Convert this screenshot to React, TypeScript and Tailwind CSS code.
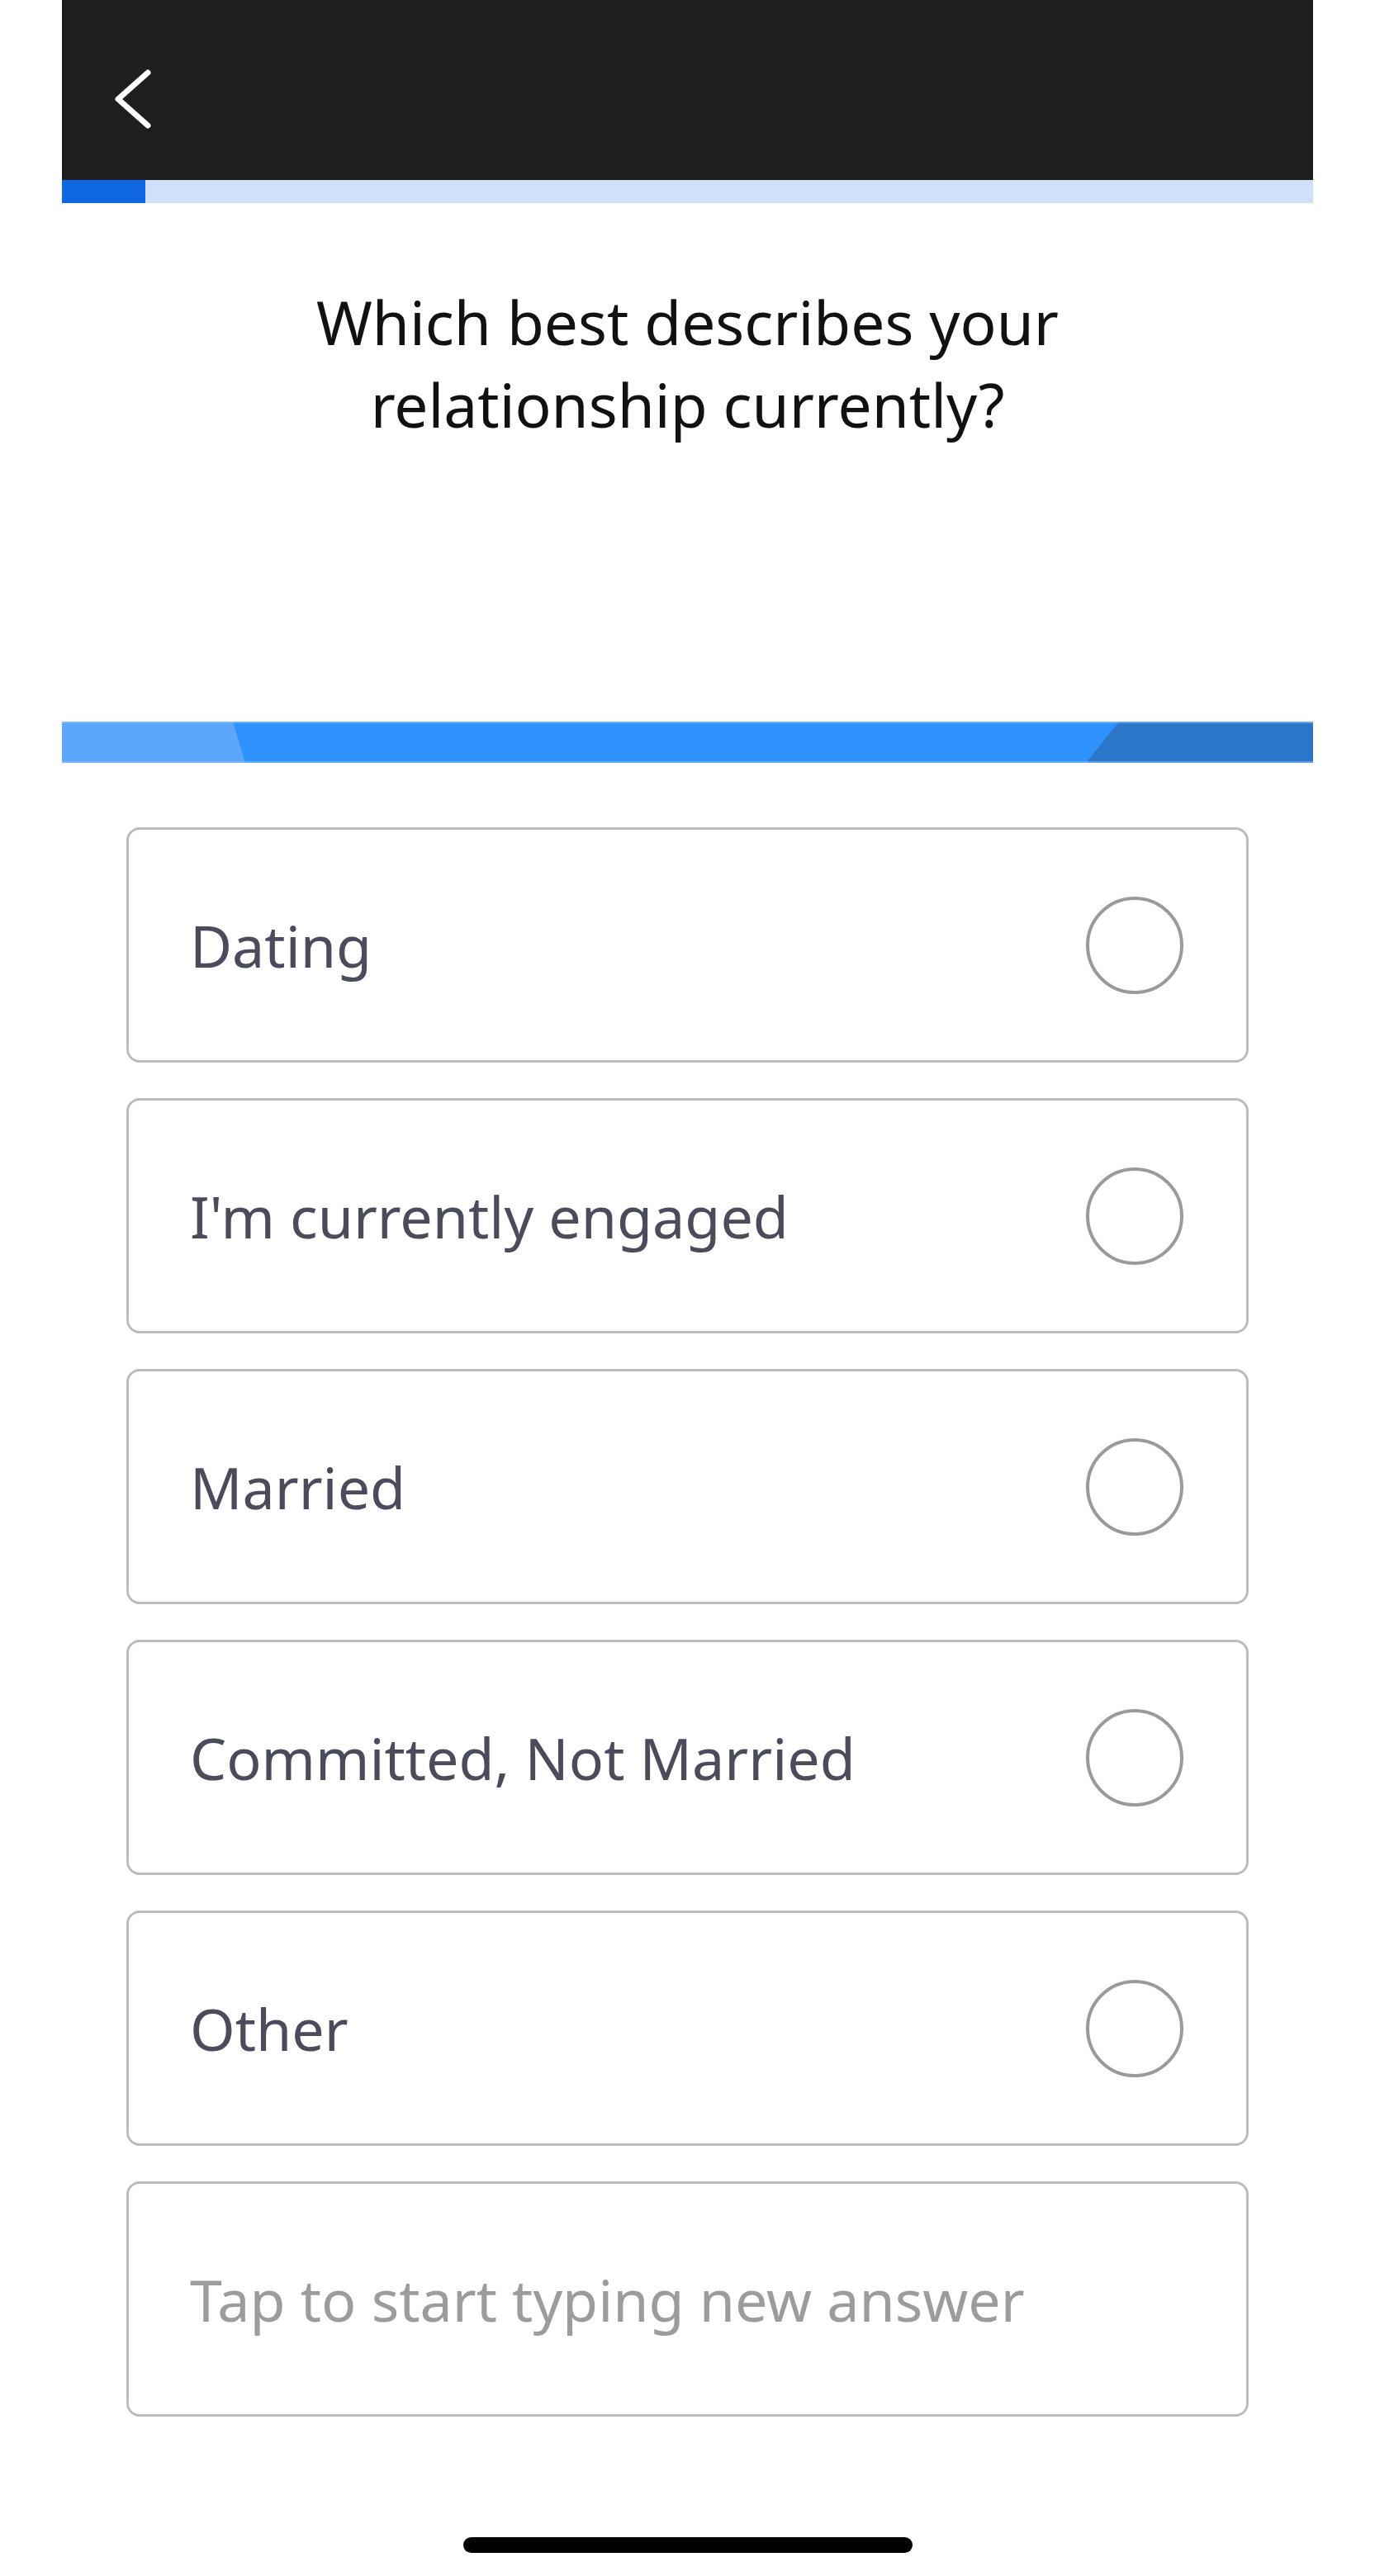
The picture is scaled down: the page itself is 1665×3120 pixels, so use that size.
import React from "react";

const options = [
  "Dating",
  "I'm currently engaged",
  "Married",
  "Committed, Not Married",
  "Other",
];

export default function App() {
  return (
    <div
      className="min-h-[3120px] w-full bg-white"
      style={{ fontFamily: '"Noto Sans", "Open Sans", sans-serif' }}
    >
      <div className="mx-[75px] flex flex-col">
        {/* Header */}
        <div className="h-[218px] bg-[#1e1e1e] pl-[63px] pt-[83px]">
          <svg width="46" height="74" viewBox="0 0 46 74" fill="none">
            <path
              d="M41 5 L5 37 L41 69"
              stroke="#ffffff"
              strokeWidth="7"
              strokeLinecap="round"
              strokeLinejoin="round"
            />
          </svg>
        </div>
        {/* Progress */}
        <div className="flex h-[28px] bg-[#cfe1fa]">
          <div className="h-full w-[101px] bg-[#0f67e3]" />
        </div>

        {/* Question */}
        <div className="pt-[94px] text-center text-[73px] leading-[100px] text-[#111111]">
          <p>Which best describes your</p>
          <p>relationship currently?</p>
        </div>

        {/* Banner */}
        <div className="mt-[334px] h-[50px] w-full">
          <svg
            width="100%"
            height="50"
            viewBox="0 0 1515 50"
            preserveAspectRatio="none"
          >
            <rect x="0" y="0" width="1515" height="50" fill="#3092fc" />
            <polygon points="0,0 207,0 222,50 0,50" fill="#5ca7fb" />
            <polygon points="1280,0 1515,0 1515,50 1240,50" fill="#2b76c8" />
            <rect x="0" y="0" width="1515" height="2" fill="#8ec3fb" opacity="0.6" />
            <rect x="0" y="48" width="1515" height="2" fill="#8ec3fb" opacity="0.6" />
          </svg>
        </div>

        {/* Options */}
        <div className="mx-[78px] mt-[78px] flex flex-col gap-[43px]">
          {options.map((o) => (
            <div
              key={o}
              className="flex h-[285px] items-center justify-between rounded-[16px] border-[3px] border-[#bcbcbc] pl-[74px] pr-[76px]"
            >
              <span className="text-[70px] leading-none text-[#4a4c5b]">{o}</span>
              <span className="h-[118px] w-[118px] rounded-full border-[4px] border-[#9a9a9a]" />
            </div>
          ))}
          <div className="flex h-[285px] items-center rounded-[16px] border-[3px] border-[#bcbcbc] pl-[74px]">
            <span className="text-[70px] leading-none text-[#9c9c9c]">
              Tap to start typing new answer
            </span>
          </div>
        </div>

        {/* Home indicator */}
        <div className="mx-auto mt-[146px] h-[19px] w-[544px] rounded-full bg-black" />
      </div>
    </div>
  );
}
